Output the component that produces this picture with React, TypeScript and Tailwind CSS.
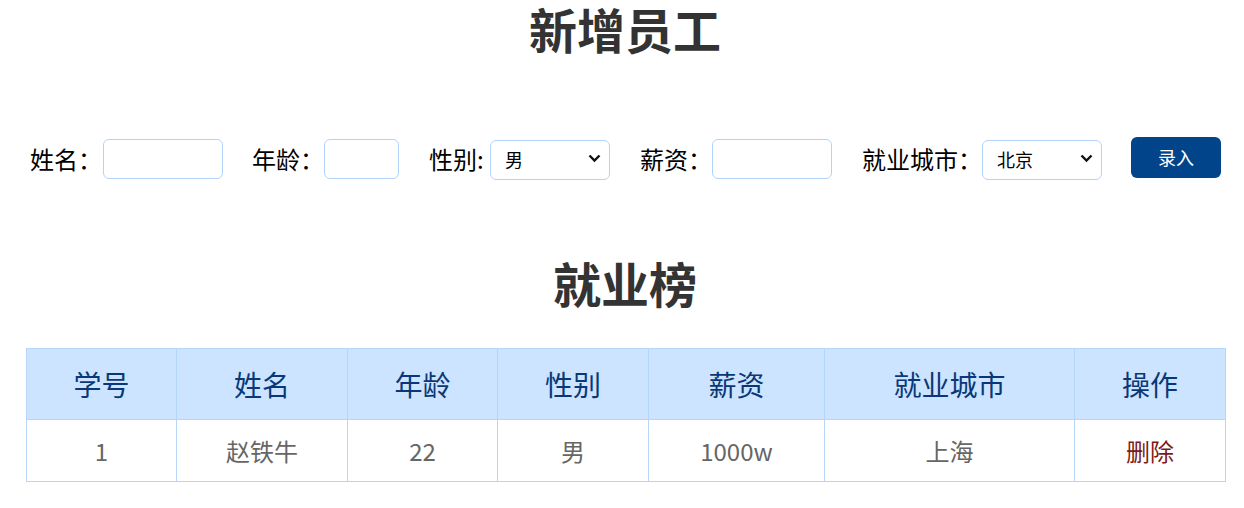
import {FunctionComponent} from 'react'

const font = "font-['Microsoft_YaHei','Noto_Sans_CJK_SC',sans-serif]"

const inputCls = "h-[40px] rounded-[6px] border border-[#b3d4fa] bg-white outline-none"

const rows = [
    {id: 1, name: "赵铁牛", age: 22, gender: "男", salary: "1000w", city: "上海"},
]

const Select: FunctionComponent<{ options: string[] }> = ({options}) => {
    return (
        <div className="relative h-[40px] w-[120px]">
            <select defaultValue={options[0]}
                    className="h-full w-full appearance-none rounded-[6px] border border-[#b3d4fa] bg-white pl-[14px] text-[18px] text-black outline-none">
                {options.map(o => <option key={o}>{o}</option>)}
            </select>
            <svg className="pointer-events-none absolute right-[9px] top-[15px]" width="13" height="9"
                 viewBox="0 0 13 9">
                <path d="M1.5 1.5 L6.5 6.5 L11.5 1.5" fill="none" stroke="#111" strokeWidth="2.4"/>
            </svg>
        </div>
    )
}

const App: FunctionComponent = () => {
    return (
        <div className={"min-h-[508px] w-[1244px] bg-white text-[#333] " + font}>
            <h1 className="pl-[6px] text-center text-[48px] font-bold leading-[56px] text-[#333]">新增员工</h1>

            <div className="mt-[83px] flex items-center pl-[30px] text-[24px] text-black">
                <label className="w-[73px]">姓名：</label>
                <input className={inputCls + " w-[120px]"}/>

                <label className="ml-[29px] w-[72px]">年龄：</label>
                <input className={inputCls + " w-[75px]"}/>

                <label className="ml-[30px] w-[61px]">性别:</label>
                <Select options={["男", "女"]}/>

                <label className="ml-[30px] w-[72px]">薪资：</label>
                <input className={inputCls + " w-[120px]"}/>

                <label className="ml-[30px] w-[120px]">就业城市：</label>
                <Select options={["北京", "上海", "广州", "深圳"]}/>

                <button
                    className="-mt-[3px] ml-[29px] h-[41px] w-[90px] rounded-[6px] bg-[#01448a] text-[18px] text-white">
                    录入
                </button>
            </div>

            <h1 className="mt-[75px] pl-[6px] text-center text-[48px] font-bold leading-[56px] text-[#333]">就业榜</h1>

            <div className="mt-[38px] px-[26px]">
                <table className="w-[1200px] table-fixed border-collapse">
                    <colgroup>
                        <col className="w-[150px]"/>
                        <col className="w-[171px]"/>
                        <col className="w-[150px]"/>
                        <col className="w-[151px]"/>
                        <col className="w-[176px]"/>
                        <col className="w-[250px]"/>
                        <col className="w-[151px]"/>
                    </colgroup>
                    <thead>
                    <tr className="h-[71px] bg-[#cce4ff] text-[28px] text-[#0a3876]">
                        {["学号", "姓名", "年龄", "性别", "薪资", "就业城市", "操作"].map(h =>
                            <th key={h} className="border border-[#b6d6f9] font-normal">{h}</th>
                        )}
                    </tr>
                    </thead>
                    <tbody>
                    {rows.map(r =>
                        <tr key={r.id} className="h-[62px] text-center text-[24px] text-[#666]">
                            <td className="border border-[#b6d6f9]">{r.id}</td>
                            <td className="border border-[#b6d6f9]">{r.name}</td>
                            <td className="border border-[#b6d6f9]">{r.age}</td>
                            <td className="border border-[#b6d6f9]">{r.gender}</td>
                            <td className="border border-[#b6d6f9]">{r.salary}</td>
                            <td className="border border-[#b6d6f9]">{r.city}</td>
                            <td className="border border-[#b6d6f9]">
                                <a className="cursor-pointer text-[#7b1a1a]">删除</a>
                            </td>
                        </tr>
                    )}
                    </tbody>
                </table>
            </div>
        </div>
    )
}

export default App
